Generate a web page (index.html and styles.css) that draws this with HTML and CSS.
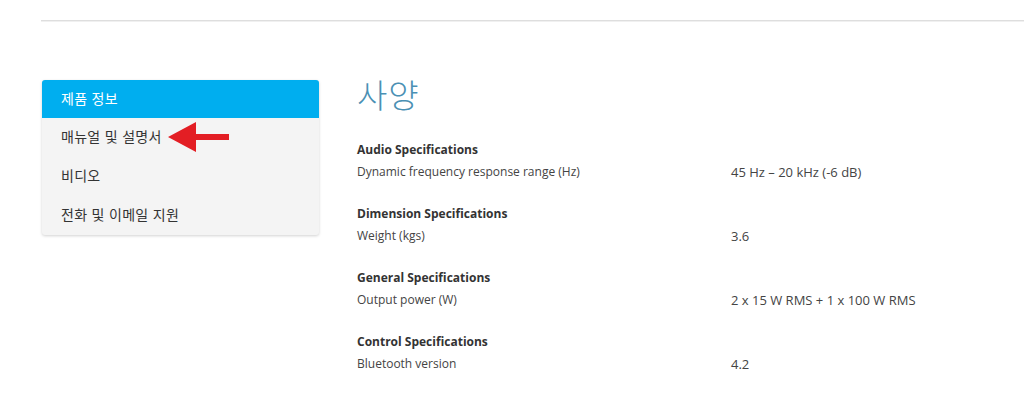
FILE: index.html
```html
<!DOCTYPE html>
<html lang="ko">
<head>
<meta charset="utf-8">
<link rel="stylesheet" href="styles.css">
</head>
<body>
<div class="page">
  <div class="topline"></div>
  <div class="main">
    <aside class="sidebar">
      <nav class="menu">
        <div class="item active">제품 정보</div>
        <div class="item arrowed">매뉴얼 및 설명서
          <svg class="arrow" width="62" height="32" viewBox="0 0 62 32"><polygon points="0,16 28,1 28,13 61,13 61,19 28,19 28,31" fill="#e31e24"/></svg>
        </div>
        <div class="item">비디오</div>
        <div class="item">전화 및 이메일 지원</div>
      </nav>
    </aside>
    <section class="content">
      <h1 class="title">사양</h1>
      <div class="group">
        <div class="ghead">Audio Specifications</div>
        <div class="row"><span class="label">Dynamic frequency response range (Hz)</span><span class="value">45 Hz – 20 kHz (-6 dB)</span></div>
      </div>
      <div class="group">
        <div class="ghead">Dimension Specifications</div>
        <div class="row"><span class="label">Weight (kgs)</span><span class="value">3.6</span></div>
      </div>
      <div class="group">
        <div class="ghead">General Specifications</div>
        <div class="row"><span class="label">Output power (W)</span><span class="value">2 x 15 W RMS + 1 x 100 W RMS</span></div>
      </div>
      <div class="group">
        <div class="ghead">Control Specifications</div>
        <div class="row"><span class="label">Bluetooth version</span><span class="value">4.2</span></div>
      </div>
    </section>
  </div>
</div>
</body>
</html>
```
FILE: styles.css
```css
html, body { margin: 0; padding: 0; background: #fff; }
body { font-family: "Open Sans", "Noto Sans CJK KR", sans-serif; color: #333; }
.page { padding: 20px 0 0 41px; }
.topline { height: 1px; background: #dedede; border-bottom: 1px solid #f0f0f0; }
.main { display: flex; padding-top: 58px; }
.sidebar { width: 277px; margin-left: 1px; flex: none; }
.menu { background: #f4f4f4; border-radius: 3px; box-shadow: 0 1px 3px rgba(0,0,0,0.18); overflow: visible; }
.item { position: relative; height: 39px; line-height: 37px; padding-left: 19px; font-size: 14px; letter-spacing: 0.3px; color: #333; font-family: "Noto Sans CJK KR", sans-serif; }
.item.active { background: #00aeef; color: #fff; height: 38px; border-radius: 3px 3px 0 0; }
.arrow { position: absolute; left: 126px; top: 3px; }
.content { margin-left: 38px; flex: 1; }
.title { margin: -4px 0 0; font-size: 33px; font-weight: 300; line-height: 36px; color: #4a90b4; font-family: "Noto Sans CJK KR", sans-serif; letter-spacing: 1px; }
.group { margin-top: 0; height: 64px; }
.content .group:first-of-type { margin-top: 27px; }
.ghead { font-size: 12px; font-weight: 700; line-height: 22px; color: #333; }
.row { display: flex; font-size: 12px; line-height: 22px; color: #444; }
.label { width: 374px; flex: none; }
.value { font-size: 13px; }
```
